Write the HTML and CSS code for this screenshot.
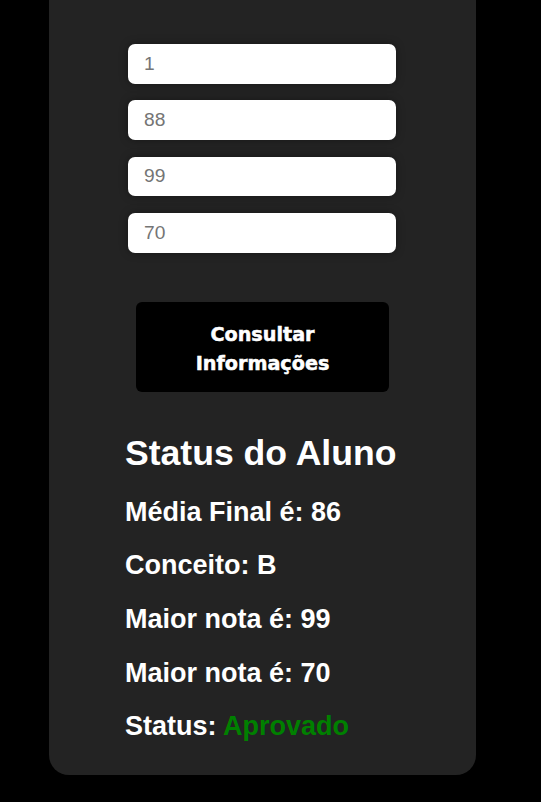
FILE: index.html
```html
<!DOCTYPE html>
<html lang="pt-BR">
<head>
<meta charset="utf-8">
<title>Status do Aluno</title>
<link rel="stylesheet" href="styles.css">
</head>
<body>
<main class="card">
  <form class="form">
    <input class="field" type="text" placeholder="1">
    <input class="field" type="text" placeholder="88">
    <input class="field" type="text" placeholder="99">
    <input class="field" type="text" placeholder="70">
    <button class="btn" type="button">Consultar Informações</button>
  </form>
  <section class="result">
    <h2 class="title">Status do Aluno</h2>
    <p class="line">Média Final é: 86</p>
    <p class="line">Conceito: B</p>
    <p class="line">Maior nota é: 99</p>
    <p class="line">Maior nota é: 70</p>
    <p class="line">Status: <span class="ok">Aprovado</span></p>
  </section>
</main>
</body>
</html>
```

FILE: styles.css
```css
html, body {
  margin: 0;
  padding: 0;
  background: #000;
}
body {
  font-family: "Liberation Sans", Arial, sans-serif;
  height: 802px;
  overflow: hidden;
}
.card {
  margin-left: 49px;
  width: 427px;
  box-sizing: border-box;
  padding: 44px 76px 33px 75px;
  background: #232323;
  border-radius: 0 0 20px 20px;
}
.form {
  display: flex;
  flex-direction: column;
  align-items: center;
  gap: 16.63px;
  margin: 0;
}
.field {
  width: 268px;
  height: 39.7px;
  box-sizing: border-box;
  border: none;
  border-radius: 7px;
  background: #fff;
  padding: 0 16px;
  font-family: "Liberation Sans", Arial, sans-serif;
  font-size: 19.2px;
  color: #333;
  box-shadow: 0 0 8px rgba(0, 0, 0, 0.35);
  outline: none;
}
.field::placeholder {
  color: #757575;
}
.btn {
  margin-top: 32.7px;
  margin-left: 1px;
  width: 253px;
  height: 90px;
  box-sizing: border-box;
  padding: 4px 40px 0;
  border: none;
  border-radius: 6px;
  background: #000;
  color: #fff;
  font-family: "DejaVu Sans", Verdana, sans-serif;
  font-weight: bold;
  font-size: 19.2px;
  line-height: 29px;
  text-align: center;
  -webkit-text-stroke: 0.5px #fff;
}
.result {
  margin-top: 41px;
  padding-left: 1px;
  display: flex;
  flex-direction: column;
  gap: 22.7px;
  color: #fff;
}
.title {
  margin: 0;
  font-size: 35.6px;
  font-weight: bold;
  line-height: normal;
}
.line {
  margin: 0;
  font-size: 27px;
  font-weight: bold;
  line-height: normal;
}
.ok {
  color: #008000;
}
```
